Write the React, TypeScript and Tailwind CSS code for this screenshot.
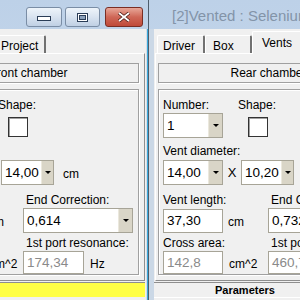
import React from 'react';

const sans = "font-['Liberation_Sans',Arial,sans-serif]";

function DropArrow() {
  return (
    <svg width="6" height="3" viewBox="0 0 6 3">
      <path d="M0 0h6L3 3z" fill="#000" />
    </svg>
  );
}

function Combo({ value, width, btn = 'w-[14px]' }: { value: string; width: string; btn?: string }) {
  return (
    <div className={`flex h-[25px] ${width} shrink-0 border border-[#a7a497] bg-white`}>
      <div className="flex-1 overflow-hidden whitespace-nowrap pl-[3px] text-[13.5px] leading-[23px] text-black">{value}</div>
      <div className={`flex ${btn} items-center justify-center border-l border-[#ebe8dd] bg-[#d9d5c7]`}>
        <DropArrow />
      </div>
    </div>
  );
}

function Field({ value, muted, height, width }: { value: string; muted?: boolean; height: string; width: string }) {
  return (
    <div
      className={`${height} ${width} shrink-0 overflow-hidden whitespace-nowrap border border-[#a7a497] bg-white pl-[3px] text-[13.5px] leading-[21px] ${
        muted ? 'text-[#8a8a8a]' : 'text-black'
      }`}
    >
      {value}
    </div>
  );
}

type FormProps = {
  chamber: string;
  num: string;
  d1: string;
  d2: string;
  len: string;
  corr: string;
  area: string;
  res: string;
  endCol: string;
};

function VentsForm(p: FormProps) {
  return (
    <div className="ml-[1px] mr-[1px] flex flex-1 flex-col border border-white border-r-[#8e8e8e] border-b-[#8e8e8e] pb-[5px] pl-[2px] pr-[5px] text-[12px] leading-[14px] text-black">
      <div className="mt-[9px] flex h-[20px] items-center justify-center border border-[#a0a0a0] shadow-[1px_1px_0_#fff]">
        {p.chamber}
      </div>
      <div className="mt-[6px] flex flex-1 flex-col border border-[#a0a0a0] pl-[4px] pt-[8px] shadow-[inset_1px_1px_0_#fff,1px_1px_0_#fff]">
        <div className="flex h-[14px]">
          <span className="w-[75px] shrink-0">Number:</span>
          <span>Shape:</span>
        </div>
        <div className="mt-[1px] flex">
          <Combo value={p.num} width="w-[60px]" />
          <div className="ml-[25px] mt-[4px] h-[20px] w-[20px] border border-[#333] bg-white shadow-[inset_1px_1px_0_#a0a0a0]" />
        </div>
        <div className="mt-[6px] h-[14px]">Vent diameter:</div>
        <div className="mt-[2px] flex items-center">
          <Combo value={p.d1} width="w-[60px]" />
          <span className="w-[18px] shrink-0 text-center text-[13px]">X</span>
          <Combo value={p.d2} width="w-[53px]" btn="w-[12px]" />
          <span className="ml-[9px] shrink-0 pt-[2px]">cm</span>
        </div>
        <div className="mt-[8px] flex h-[14px]">
          <span className={`${p.endCol} shrink-0`}>Vent length:</span>
          <span className="shrink-0 pl-[3px]">End Correction:</span>
        </div>
        <div className="mt-[1px] flex">
          <div className={`${p.endCol} flex shrink-0 items-center`}>
            <Field value={p.len} height="h-[24px]" width="w-[60px]" />
            <span className="ml-[5px] pt-[3px]">cm</span>
          </div>
          <Combo value={p.corr} width="w-[110px]" />
        </div>
        <div className="mt-[3px] flex h-[14px]">
          <span className={`${p.endCol} shrink-0`}>Cross area:</span>
          <span className="shrink-0 pl-[3px]">1st port resonance:</span>
        </div>
        <div className="mt-[1px] flex">
          <div className={`${p.endCol} flex shrink-0 items-center`}>
            <Field value={p.area} muted height="h-[23px]" width="w-[60px]" />
            <span className="ml-[6px] pt-[3px]">cm^2</span>
          </div>
          <div className="flex shrink-0 items-center">
            <Field value={p.res} muted height="h-[23px]" width="w-[61px]" />
            <span className="ml-[6px] pt-[3px]">Hz</span>
          </div>
        </div>
      </div>
    </div>
  );
}

function Tab({ label, width, pad, selected }: { label: string; width: string; pad: string; selected?: boolean }) {
  return (
    <div
      className={`${width} ${pad} shrink-0 rounded-t-[2px] border-l border-t border-white border-r-2 border-r-[#717171] bg-[#f0f0f0] text-[12px] leading-[14px] text-black ${
        selected ? 'relative z-10 -mb-[1px] h-[23px] pt-[4px]' : 'h-[18px] pt-[3px]'
      }`}
    >
      {label}
    </div>
  );
}

function CaptionButtons() {
  return (
    <div className="flex h-[29px] items-start justify-end pr-[5px] pt-[7px]">
      <div className="flex h-[20px] w-[36px] items-center justify-center rounded-[3px] border border-[#7a8da5] bg-gradient-to-b from-[#eef4fa] via-[#d8e3f0] to-[#c0d0e4] pt-[3px]">
        <svg width="14" height="6" viewBox="0 0 14 6">
          <rect x="0.5" y="0.5" width="13" height="4" fill="#fff" stroke="#2a3d57" />
        </svg>
      </div>
      <div className="ml-[3px] flex h-[20px] w-[35px] items-center justify-center rounded-[3px] border border-[#7a8da5] bg-gradient-to-b from-[#eef4fa] via-[#d8e3f0] to-[#c0d0e4]">
        <svg width="11" height="9" viewBox="0 0 11 9">
          <rect x="0.5" y="0.5" width="10" height="8" fill="#fff" stroke="#2a3d57" />
          <rect x="2.5" y="2.5" width="6" height="4" fill="#8aa0bb" stroke="#2a3d57" />
        </svg>
      </div>
      <div className="ml-[5px] flex h-[20px] w-[38px] items-center justify-center rounded-[3px] border border-[#7a2e24] bg-gradient-to-b from-[#e7a799] via-[#cf6757] to-[#c04a39]">
        <svg width="14" height="10" viewBox="0 0 14 10">
          <path d="M2 1l5 4 5-4M2 9l5-4 5 4" fill="none" stroke="#4a1a14" strokeWidth="3.4" />
          <path d="M2 1l5 4 5-4M2 9l5-4 5 4" fill="none" stroke="#fff" strokeWidth="1.8" />
        </svg>
      </div>
    </div>
  );
}

function AppIcon() {
  const dots: [number, number][] = [];
  for (let y = 2; y < 12; y++) for (let x = 2; x < 6; x++) if ((x + y) % 2 === 0) dots.push([x, y]);
  return (
    <svg width="8" height="17" viewBox="0 0 8 17" shapeRendering="crispEdges">
      <rect width="8" height="17" fill="#1a1a1a" />
      {dots.map(([x, y]) => (
        <rect key={`${x}-${y}`} x={x} y={y} width="1" height="1" fill="#fff" />
      ))}
      <rect x="2" y="13" width="4" height="2" fill="#9a9a9a" />
    </svg>
  );
}

export default function App() {
  return (
    <div className={`flex h-[300px] w-[300px] overflow-hidden bg-[#4e5d6c] ${sans}`}>
      {/* left window, mostly scrolled off to the left */}
      <div className="flex h-[300px] w-[149px] shrink-0 flex-col border-r border-[#4e5d6c] bg-gradient-to-b from-[#bdd1e8] to-[#d2e0ef]">
        <CaptionButtons />
        <div className="flex flex-1">
          <div className="w-[146px] overflow-hidden bg-[#f0f0f0]">
            <div className="-ml-[86px] flex h-full w-[232px] flex-col">
              <div className="flex h-[24px] items-end pl-[3px]">
                <Tab label="Vents" width="w-[77px]" pad="pl-[9px]" selected />
                <Tab label="Project" width="w-[52px]" pad="pl-[6px]" />
              </div>
              <VentsForm
                chamber="Front chamber"
                num="1"
                d1="14,00"
                d2="14,00"
                len="12,50"
                corr="0,614"
                area="153,9"
                res="174,34"
                endCol="w-[100px]"
              />
              <div className="mr-[1px] mt-[1px] h-[15px] border-t border-[#8e8e8e] bg-[#ffff44]" />
              <div className="h-[3px]" />
            </div>
          </div>
          <div className="w-[1px] bg-[#d5dde6]" />
          <div className="w-[1px] bg-[#39a9dc]" />
        </div>
      </div>

      {/* right window */}
      <div className="flex h-[300px] w-[151px] shrink-0 flex-col bg-gradient-to-b from-[#bdd1e8] to-[#d2e0ef]">
        <div className="flex h-[29px] items-center pl-[11px] pt-[3px]">
          <AppIcon />
          <span className="ml-[12px] whitespace-nowrap text-[15px] text-[#8394a8]">
            [2]Vented : Selenium
          </span>
        </div>
        <div className="flex flex-1">
          <div className="w-[5px] bg-[#cbd8e6]" />
          <div className="w-[146px] overflow-hidden bg-[#f0f0f0]">
            <div className="flex h-full w-[232px] flex-col">
              <div className="flex h-[24px] items-end pl-[3px]">
                <Tab label="Driver" width="w-[48px]" pad="pl-[5px]" />
                <Tab label="Box" width="w-[47px]" pad="pl-[7px]" />
                <Tab label="Vents" width="w-[56px]" pad="pl-[9px]" selected />
              </div>
              <VentsForm
                chamber="Rear chamber"
                num="1"
                d1="14,00"
                d2="10,20"
                len="37,30"
                corr="0,732"
                area="142,8"
                res="460,75"
                endCol="w-[105px]"
              />
              <div className="mt-[1px] flex h-[15px] items-center border-t border-[#8e8e8e] pl-[61px] text-[11px] font-bold leading-[13px] text-black">
                Parameters
              </div>
              <div className="h-[3px] border-t border-white" />
            </div>
          </div>
        </div>
      </div>
    </div>
  );
}
